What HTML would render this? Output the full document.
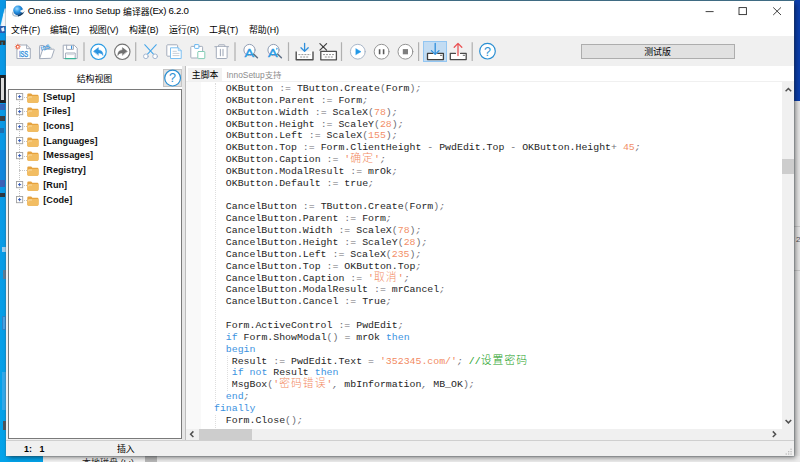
<!DOCTYPE html>
<html lang="zh-CN">
<head>
<meta charset="utf-8">
<title>One6.iss - Inno Setup 编译器(Ex) 6.2.0</title>
<style>
html,body{margin:0;padding:0;}
body{width:800px;height:462px;overflow:hidden;position:relative;background:linear-gradient(180deg,#0a97e5 0%,#0a9ae6 40%,#03a3ea 100%);
  font-family:"Liberation Sans","Noto Sans CJK SC",sans-serif;font-size:9px;color:#000;}
div,span,svg{box-sizing:border-box;}
#desk,#app{position:absolute;left:0;top:0;width:800px;height:462px;overflow:hidden;}
#app div,#app span,#app svg,#desk div{position:absolute;}
#win{left:6px;top:1px;width:788px;height:455px;background:#f0f0f0;
  box-shadow:1.5px 1.5px 5px rgba(0,0,0,.5), 0 0 0 0.6px rgba(90,110,125,.35);}
#title{left:6px;top:1px;width:788px;height:21px;background:#fff;}
#title .txt{left:21.8px;top:4.3px;font-size:9.7px;line-height:12px;white-space:nowrap;color:#000;letter-spacing:-0.05px;}
#app .il2{position:relative;letter-spacing:-0.3px;}
#app .il{position:relative;top:0.9px;font-size:8.8px;letter-spacing:0;}
#menu{left:6px;top:22px;width:788px;height:14px;background:#fff;}
#menu span{top:2px;font-size:8.9px;line-height:12px;white-space:nowrap;}
#tb{left:6px;top:36px;width:788px;height:29.5px;background:#f0f0f0;}
.sep{top:6px;width:1px;height:18px;background:#a0a0a0;}
#lhead{left:6px;top:65.5px;width:176px;height:24px;background:#fff;}
#lhead .t{left:1.5px;width:174px;top:7.3px;text-align:center;font-size:8.9px;line-height:12px;}
#hbtn{left:157px;top:3.3px;width:18.6px;height:18.7px;background:#e1e1e1;border:1px solid #c4c4c4;}
#tree{left:7.5px;top:89px;width:174.5px;height:349.6px;background:#fff;border:1px solid #7a7a7a;}
.ti{left:34.8px;font-weight:bold;font-size:9.15px;line-height:12px;white-space:nowrap;font-family:"Liberation Sans",sans-serif;color:#111;}
.fo{left:18.8px;}
.ex{left:7.4px;}
.vd{width:0;border-left:1px dotted #c4c4c4;}
.hd{height:0;border-top:1px dotted #c4c4c4;}
#split{left:182px;top:65.5px;width:3.5px;height:374px;background:#e6e6e6;border-right:1px solid #bdbdbd;}
#ed{left:185.5px;top:65.5px;width:608.5px;height:374px;background:#fff;}
#tabs{left:0;top:0;width:608.5px;height:16px;background:#fff;}
#tab1{left:2.5px;top:2.5px;width:34px;height:13.5px;background:#f2f2f2;}
#tab1 span{left:3.8px;top:1.2px;font-size:8.9px;line-height:12px;white-space:nowrap;color:#000;}
#tab2{left:41px;top:3.7px;font-size:8.4px;line-height:12px;white-space:nowrap;color:#8c8c8c;}
#margin{left:185.5px;top:81.5px;width:15px;height:347.5px;background:#f9f9f9;}
#code{left:186px;top:82px;width:596px;height:347px;overflow:hidden;
  font-family:"Liberation Mono",monospace;font-size:9.9px;}
.ln{white-space:pre;height:11.85px;line-height:11.85px;color:#262626;}
#code span{position:static !important;}
.k{color:#3d93df;} .n{color:#f28f68;}
.s{color:#f28a62;font-family:"Liberation Mono","Noto Sans CJK SC",monospace;}
.c{color:#22a022;font-family:"Liberation Mono","Noto Sans CJK SC",monospace;}
.z{font-family:"Noto Sans CJK SC",sans-serif;font-size:10.8px;letter-spacing:1.05px;font-weight:300;line-height:0;}
.p{color:#6e6e76;} .q{color:#70707a;font-style:italic;}
.g{width:0;border-left:1px dotted #dedede;}
#vs{left:781.6px;top:81.5px;width:12.4px;height:347.5px;background:#f0f0f0;}
#vs .th{left:0;top:77.5px;width:12.4px;height:14.5px;background:#cdcdcd;}
#hs{left:185.5px;top:429px;width:596px;height:10.5px;background:#f0f0f0;}
#hs .th{left:13px;top:0;width:53.5px;height:10.5px;background:#cdcdcd;}
#corner{left:781.6px;top:429px;width:12.4px;height:10.5px;background:#f0f0f0;}
#status{left:6px;top:439.7px;width:788px;height:16.8px;background:#f0f0f0;border-top:1px solid #cfcfcf;}
#status span{top:2.2px;font-size:8.9px;line-height:12px;white-space:nowrap;}
</style>
</head>
<body>
<div id="desk">
  <div style="left:794px;top:0;width:6px;height:101px;background:#0b3fae"></div>
  <div style="left:794px;top:101px;width:6px;height:361px;background:#e6e6e6"></div>
  <div style="left:794px;top:226px;width:6px;height:1px;background:#c8c8c8"></div>
  <div style="left:794px;top:270px;width:6px;height:1px;background:#c8c8c8"></div>
  <div style="left:796px;top:235px;font-size:8px;line-height:9px;color:#555">2.</div>
  <div style="left:5.5px;top:0;width:789px;height:1.2px;background:#3f7391"></div>

  <svg style="position:absolute;left:0;top:0" width="6" height="60" viewBox="0 0 6 60"><path d="M4.6 8.5L6 8.5L6 26L0.4 26Z" fill="#dcecf8"/><path d="M3.4 14L6 12L6 26L2 26Z" fill="#f7fbfe"/><path d="M0 26H5V33H0Z" fill="#2b5cb0"/><path d="M1 28.5L4 27L4.4 31L2 31.5Z" fill="#e8f0fa"/><path d="M0 40.5H5.4V45H0Z" fill="#3a342c"/><path d="M1.6 42H2.6V45H1.6Z" fill="#0a99e6"/></svg>
  <div style="left:0;top:74.5px;width:6px;height:28px;background:#1f2226"></div>
  <div style="left:1px;top:78px;width:3.4px;height:22px;background:#dcdcdc"></div>
  <div style="left:0;top:103.5px;width:5px;height:6.5px;background:#3466bc"></div>
  <div style="left:0;top:116px;width:5px;height:4.5px;background:#3a3f46"></div>
  <div style="left:0;top:128px;width:4px;height:5px;background:#1d6fb0"></div>
  <div style="left:0;top:180px;width:5px;height:7px;background:#3c62b8"></div>
  <div style="left:0;top:193px;width:5px;height:4px;background:#2c3640"></div>
  <div style="left:0;top:150px;width:6px;height:30px;background:#1286dc"></div>
  <div style="left:2px;top:247px;width:4px;height:5px;background:#9ccdee"></div>
  <div style="left:3px;top:270px;width:3px;height:9px;background:#5f7f98"></div>
  <div style="left:2px;top:316px;width:4px;height:14px;background:#4aa3e4;border:1px solid #2f84c8"></div>
  <div style="left:2px;top:372px;width:4px;height:38px;background:#35a9ea"></div>
  <div style="left:3px;top:421px;width:3px;height:9px;background:#50565c"></div>
  <div style="left:43px;top:456px;width:102px;height:6px;background:#f4f4f4;overflow:hidden"><span style="position:absolute;left:39px;top:2.2px;font-size:9px;line-height:10px;white-space:nowrap;color:#222">本地磁盘 (L:)</span></div>
  <div style="left:145px;top:456px;width:12px;height:6px;background:#b9b9b9"></div>
  <div style="left:157px;top:456px;width:643px;height:6px;background:#ececec"></div>
</div>
<div id="app">
  <div id="win"></div>
  <div id="title"><svg style="left:4.5px;top:3.5px" width="15" height="14" viewBox="10.5 4.5 15 14">
<defs><radialGradient id="gl" cx="0.38" cy="0.32" r="0.75"><stop offset="0" stop-color="#9fdcff"/><stop offset="0.45" stop-color="#2a97e6"/><stop offset="1" stop-color="#0a4e9c"/></radialGradient></defs>
<circle cx="17.6" cy="10" r="4.9" fill="url(#gl)"/>
<path d="M12.7 11.4C11.2 14.4 13.4 16 16.8 15.4C20 14.8 22.8 12.8 23.4 10.4" fill="none" stroke="#b4c4d0" stroke-width="1.5"/>
<path d="M17.4 15.3C20.2 14.6 22.6 12.8 23.3 10.6" fill="none" stroke="#143e66" stroke-width="1.5"/>
<path d="M19.4 10.4L23.5 8.2L24 11.4L21.6 12.2Z" fill="#f6fafc"/>
</svg>
<svg style="left:696px;top:4px" width="84" height="14" viewBox="702 5 84 14" fill="none" stroke="#2b2b2b" stroke-width="0.9"><path d="M705.6 11.6H713.6"/><rect x="739" y="7.6" width="7.4" height="7"/><path d="M773.2 7.4L781 15M781 7.4L773.2 15"/></svg>
<span class="txt">One6.iss - Inno Setup <span class="il">编译器</span><span class="il2">(Ex) 6.2.0</span></span></div>
  <div id="menu">
    <span style="left:5px">文件(F)</span><span style="left:44px">编辑(E)</span><span style="left:83px">视图(V)</span><span style="left:123px">构建(B)</span><span style="left:163px">运行(R)</span><span style="left:203px">工具(T)</span><span style="left:243px">帮助(H)</span>
  </div>
  <div id="tb"><div style="left:417px;top:4.8px;width:23.5px;height:20.8px;background:#c2dcf3;border:1px solid #93c6f2"></div>
<svg style="left:0;top:0" width="788" height="29.5" viewBox="6 36 788 29.5" fill="none" stroke-linecap="round" stroke-linejoin="round">
<g stroke="#b0b0b0" stroke-width="1.2" stroke-linecap="butt">
<path d="M84 42.3V61M135.7 42.3V61M235 42.3V61M288.5 42.3V61M341.5 42.3V61M418.6 42.3V61M472.2 42.3V61"/>
</g>
<!-- new ISS -->
<g>
<path d="M17.3 45H26.6L30.3 48.7V58.5H17.3Z" fill="#fff" stroke="#a3acbb" stroke-width="1"/>
<path d="M26.6 45V48.7H30.3" stroke="#a3acbb" stroke-width="1"/>
<circle cx="17.8" cy="46.7" r="1.5" fill="#fff" stroke="#f2603c" stroke-width="1.1"/>
<path d="M17.8 44.1V44.5M17.8 48.9V49.3M15.2 46.7H15.6M20 46.7H20.4M16 44.9L16.3 45.2M19.3 48.2L19.6 48.5M16 48.5L16.3 48.2M19.3 45.2L19.6 44.9" stroke="#f2603c" stroke-width="0.7"/>
<text x="18.9" y="57.2" font-family="Liberation Sans, sans-serif" font-size="8.5" fill="#3592dc" stroke="#3592dc" stroke-width="0.4" textLength="9.3" lengthAdjust="spacingAndGlyphs">ISS</text>
</g>
<!-- open -->
<g>
<path d="M39.6 58.2V46.2Q39.6 45.5 40.3 45.5H43.6L45 47.3H50.3Q51 47.3 51 48V49.3" fill="#fff" stroke="#a3acbb"/>
<path d="M39.7 58.3L42.6 49.7Q42.8 49.2 43.4 49.2H53.6Q54.4 49.2 54.2 49.9L51.6 57.7Q51.4 58.3 50.8 58.3Z" fill="#fff" stroke="#a3acbb"/>
<text x="45.4" y="49.6" font-family="Liberation Sans, sans-serif" font-size="5.8" fill="#3b97dd" text-anchor="middle" stroke="#3b97dd" stroke-width="0.25" transform="rotate(-16 45.4 48)">ISS</text>
</g>
<!-- save -->
<g>
<path d="M63.6 45.2H74.2L77.2 48.2V58.5H63.6Z" fill="#fff" stroke="#a3acbb"/>
<path d="M66.6 45.2V49.4H73.4V45.2" stroke="#a3acbb"/>
<path d="M71.6 46V48.4" stroke="#2f8fe0" stroke-width="1.1"/>
<path d="M65.6 58.3V53H75.2V58.3" stroke="#a3acbb"/>
<path d="M67.3 54.6H73.5" stroke="#c9ced6" stroke-width="0.8"/>
<path d="M65.2 58.6H75.6" stroke="#3db69a" stroke-width="1.1"/>
</g>
<!-- undo -->
<g>
<circle cx="98.5" cy="51.8" r="7.7" fill="#fff" stroke="#2b9be3" stroke-width="1.15"/>
<path d="M93.6 51.3L98.4 47.6V49.9C101.6 50 103.2 52.2 103 55.6C102.2 53.7 100.8 52.9 98.4 52.9V55.1Z" fill="#2b94e0" stroke="#2b94e0" stroke-width="0.4"/>
</g>
<!-- redo -->
<g>
<circle cx="122.3" cy="51.8" r="7.7" fill="#fff" stroke="#747474" stroke-width="1.1"/>
<path d="M127.2 51.3L122.4 47.6V49.9C119.2 50 117.6 52.2 117.8 55.6C118.6 53.7 120 52.9 122.4 52.9V55.1Z" fill="#707070" stroke="#707070" stroke-width="0.4"/>
</g>
<!-- cut -->
<g>
<path d="M144.7 44.7L153.9 54.6M156.3 44.7L147.1 54.6" stroke="#45a6ea" stroke-width="1.05"/>
<circle cx="145.9" cy="56.3" r="2.35" fill="#fff" stroke="#9fb2cc" stroke-width="0.95"/>
<circle cx="155.1" cy="56.3" r="2.35" fill="#fff" stroke="#9fb2cc" stroke-width="0.95"/>
</g>
<!-- copy -->
<g>
<path d="M170.4 56.2H167.6Q166.8 56.2 166.8 55.4V45.6Q166.8 44.8 167.6 44.8H176.8Q177.6 44.8 177.6 45.6V47.4" fill="#fff" stroke="#a3acbb"/>
<path d="M170.9 47.8H178.3L181.2 50.7V58.5H170.9Z" fill="#fff" stroke="#7dc0f2"/>
<path d="M178.3 47.8V50.7H181.2" stroke="#7dc0f2" stroke-width="0.8"/>
<path d="M173 51.3H176.4M173 53.4H179M173 55.6H179" stroke="#c3c9d3" stroke-width="0.9"/>
</g>
<!-- paste -->
<g>
<path d="M197.4 58H191.6Q190.8 58 190.8 57.2V47.2Q190.8 46.4 191.6 46.4H201.8Q202.6 46.4 202.6 47.2V51" fill="#fff" stroke="#a3acbb"/>
<rect x="194.6" y="44.6" width="4.3" height="3.8" rx="0.6" fill="#fff" stroke="#6ab8f0"/>
<rect x="197.8" y="51.5" width="7" height="7.1" rx="0.6" fill="#fff" stroke="#84cdb6"/>
</g>
<!-- delete -->
<g stroke="#a3acbb">
<path d="M214.8 46.7H228.6"/>
<path d="M218.6 46.5V45.4Q218.6 44.8 219.2 44.8H224.2Q224.8 44.8 224.8 45.4V46.5"/>
<path d="M216.3 46.9V57.7Q216.3 58.5 217.1 58.5H226.3Q227.1 58.5 227.1 57.7V46.9" fill="#fff"/>
<path d="M220.4 49.4V55.8M223 49.4V55.8" stroke-width="1.1"/>
</g>
<!-- find -->
<g>
<circle cx="249.5" cy="50" r="5.6" fill="#fff" stroke="#909eb4" stroke-width="1"/>
<path d="M253.8 54.2L257.4 57.8" stroke="#5f6f86" stroke-width="1.5"/>
<text x="244.6" y="57.2" font-family="Liberation Sans, sans-serif" font-size="11.4" fill="#2b9be3" stroke="#2b9be3" stroke-width="0.35" textLength="9.6" lengthAdjust="spacingAndGlyphs">A</text>
</g>
<g>
<circle cx="273.5" cy="50" r="5.6" fill="#fff" stroke="#909eb4" stroke-width="1"/>
<path d="M277.8 54.2L281.4 57.8" stroke="#5f6f86" stroke-width="1.5"/>
<text x="268" y="57.2" font-family="Liberation Sans, sans-serif" font-size="11.4" fill="#2b9be3" stroke="#2b9be3" stroke-width="0.35" textLength="9.6" lengthAdjust="spacingAndGlyphs">A</text>
<path d="M276.3 47.6L278 48.8L276.3 50Z" fill="#2b9be3"/>
</g>
<!-- compile -->
<g>
<path d="M296.2 51.4V59.8H313V51.4" stroke="#4e4e4e" stroke-width="1.4" fill="#fff" stroke-linecap="butt"/>
<path d="M298.4 54.6H310.8M300.2 57H309" stroke="#8a8a8a" stroke-width="0.9" stroke-dasharray="2 1" stroke-linecap="butt"/>
<path d="M304.6 43.3V51.2M301 47.8L304.6 51.4L308.2 47.8" stroke="#2f8fdc" stroke-width="1.3"/>
</g>
<!-- stop compile -->
<g>
<path d="M320.8 51.4V59.8H336.4V51.4Z" stroke="#4e4e4e" stroke-width="1.3" fill="#fff" stroke-linecap="butt"/>
<path d="M323 54.6H334.4M324.8 57H332.8" stroke="#8a8a8a" stroke-width="0.9" stroke-dasharray="2 1" stroke-linecap="butt"/>
<path d="M319.9 43.6L326.6 50.2M326.6 43.6L319.9 50.2" stroke="#3e3e3e" stroke-width="1.15"/>
</g>
<!-- play -->
<g>
<circle cx="357.8" cy="51.7" r="7.4" fill="#fff" stroke="#a4b3c6" stroke-width="0.95"/>
<path d="M356 48.8L361 51.7L356 54.6Z" fill="#2298e8" stroke="#2298e8" stroke-width="0.5"/>
</g>
<!-- pause -->
<g>
<circle cx="381.6" cy="51.7" r="7.4" fill="#fff" stroke="#8e8e8e" stroke-width="0.95"/>
<path d="M379.6 49.2V54.2M383.6 49.2V54.2" stroke="#5a5a5a" stroke-width="1.6" stroke-linecap="butt"/>
</g>
<!-- stop -->
<g>
<circle cx="405.4" cy="51.7" r="7.4" fill="#fff" stroke="#8e8e8e" stroke-width="0.95"/>
<rect x="402.8" y="49.1" width="5.2" height="5.2" fill="#7e7e7e"/>
</g>
<!-- download selected -->
<g>
<path d="M427.5 53.4H443.4V59.6H427.5Z" stroke="none" fill="#fff"/><path d="M432.6 53.4H427.5V59.6H443.4V53.4H437.8" stroke="#3f3f3f" stroke-width="1.3"/>
<path d="M440.4 55.3H441.8" stroke="#555" stroke-width="0.9"/>
<path d="M435.2 43.3V54.2M431.4 50.6L435.2 54.4L439 50.6" stroke="#2f8fdc" stroke-width="1.3"/>
</g>
<!-- upload -->
<g>
<path d="M450.3 53.4H466.2V59.6H450.3Z" stroke="none" fill="#fff"/><path d="M455.4 53.4H450.3V59.6H466.2V53.4H460.6" stroke="#4a4a4a" stroke-width="1.3"/>
<path d="M463.2 55.3H464.6" stroke="#555" stroke-width="0.9"/>
<path d="M458 55.6V43.6M454.2 47.2L458 43.4L461.8 47.2" stroke="#ea5355" stroke-width="1.3"/>
</g>
<!-- help -->
<g>
<circle cx="487.5" cy="51.2" r="7.8" fill="#fff" stroke="#2b8fd2" stroke-width="1.2"/>
<text x="487.5" y="55.6" font-family="Liberation Sans, sans-serif" font-size="12.5" fill="#2b8fd2" text-anchor="middle" stroke="none">?</text>
</g>
</svg>
<div style="left:575.3px;top:8px;width:153.5px;height:15.4px;background:#e1e1e1;border:1px solid #adadad"><span style="left:0;width:150.5px;top:0.9px;text-align:center;font-size:8.9px;line-height:12px;color:#000">测试版</span></div>
</div>
  <div id="lhead"><span class="t">结构视图</span><div id="hbtn"><svg style="left:-1px;top:-1px" width="18.6" height="18.7" viewBox="0 0 18.6 18.7"><circle cx="9.6" cy="9.1" r="7.9" fill="#fff" stroke="#2b8fd2" stroke-width="1.2"/><text x="9.6" y="13.5" font-family="Liberation Sans, sans-serif" font-size="12.5" fill="#2b8fd2" text-anchor="middle">?</text></svg></div></div>
  <div id="tree"><div class="vd" style="left:10.70px;top:3.20px;height:107.04px"></div><div class="hd" style="left:10.70px;top:6.70px;width:7.50px"></div><div class="ti" style="top:0.60px">[Setup]</div><svg class="fo" style="top:2.50px" width="12" height="10" viewBox="0 0 12 10"><path d="M0.3 1.6 Q0.3 0.5 1.4 0.5 L4.2 0.5 L5.4 1.8 L10.4 1.8 Q11.5 1.8 11.5 2.9 L11.5 8.6 Q11.5 9.7 10.4 9.7 L1.4 9.7 Q0.3 9.7 0.3 8.6 Z" fill="#e5a23e"/><path d="M0.3 4 Q0.3 3 1.4 3 L10.6 3 Q11.7 3 11.7 4 L11.5 8.6 Q11.5 9.7 10.4 9.7 L1.4 9.7 Q0.3 9.7 0.3 8.6 Z" fill="#f2bd62"/><path d="M1.6 5.4V4.6Q1.6 4 2.2 4H5" stroke="#fbe3b6" stroke-width="0.8" fill="none"/></svg><svg class="ex" style="top:3.10px" width="8" height="8" viewBox="0 0 8 8"><rect x="0.5" y="0.5" width="6.2" height="6.2" fill="#fff" stroke="#a0a0a0" stroke-width="0.9"/><path d="M2 3.6H5.2M3.6 2V5.2" stroke="#3056b4" stroke-width="0.9" fill="none"/></svg><div class="hd" style="left:10.70px;top:21.42px;width:7.50px"></div><div class="ti" style="top:15.32px">[Files]</div><svg class="fo" style="top:17.22px" width="12" height="10" viewBox="0 0 12 10"><path d="M0.3 1.6 Q0.3 0.5 1.4 0.5 L4.2 0.5 L5.4 1.8 L10.4 1.8 Q11.5 1.8 11.5 2.9 L11.5 8.6 Q11.5 9.7 10.4 9.7 L1.4 9.7 Q0.3 9.7 0.3 8.6 Z" fill="#e5a23e"/><path d="M0.3 4 Q0.3 3 1.4 3 L10.6 3 Q11.7 3 11.7 4 L11.5 8.6 Q11.5 9.7 10.4 9.7 L1.4 9.7 Q0.3 9.7 0.3 8.6 Z" fill="#f2bd62"/><path d="M1.6 5.4V4.6Q1.6 4 2.2 4H5" stroke="#fbe3b6" stroke-width="0.8" fill="none"/></svg><svg class="ex" style="top:17.82px" width="8" height="8" viewBox="0 0 8 8"><rect x="0.5" y="0.5" width="6.2" height="6.2" fill="#fff" stroke="#a0a0a0" stroke-width="0.9"/><path d="M2 3.6H5.2M3.6 2V5.2" stroke="#3056b4" stroke-width="0.9" fill="none"/></svg><div class="hd" style="left:10.70px;top:36.14px;width:7.50px"></div><div class="ti" style="top:30.04px">[Icons]</div><svg class="fo" style="top:31.94px" width="12" height="10" viewBox="0 0 12 10"><path d="M0.3 1.6 Q0.3 0.5 1.4 0.5 L4.2 0.5 L5.4 1.8 L10.4 1.8 Q11.5 1.8 11.5 2.9 L11.5 8.6 Q11.5 9.7 10.4 9.7 L1.4 9.7 Q0.3 9.7 0.3 8.6 Z" fill="#e5a23e"/><path d="M0.3 4 Q0.3 3 1.4 3 L10.6 3 Q11.7 3 11.7 4 L11.5 8.6 Q11.5 9.7 10.4 9.7 L1.4 9.7 Q0.3 9.7 0.3 8.6 Z" fill="#f2bd62"/><path d="M1.6 5.4V4.6Q1.6 4 2.2 4H5" stroke="#fbe3b6" stroke-width="0.8" fill="none"/></svg><svg class="ex" style="top:32.54px" width="8" height="8" viewBox="0 0 8 8"><rect x="0.5" y="0.5" width="6.2" height="6.2" fill="#fff" stroke="#a0a0a0" stroke-width="0.9"/><path d="M2 3.6H5.2M3.6 2V5.2" stroke="#3056b4" stroke-width="0.9" fill="none"/></svg><div class="hd" style="left:10.70px;top:50.86px;width:7.50px"></div><div class="ti" style="top:44.76px">[Languages]</div><svg class="fo" style="top:46.66px" width="12" height="10" viewBox="0 0 12 10"><path d="M0.3 1.6 Q0.3 0.5 1.4 0.5 L4.2 0.5 L5.4 1.8 L10.4 1.8 Q11.5 1.8 11.5 2.9 L11.5 8.6 Q11.5 9.7 10.4 9.7 L1.4 9.7 Q0.3 9.7 0.3 8.6 Z" fill="#e5a23e"/><path d="M0.3 4 Q0.3 3 1.4 3 L10.6 3 Q11.7 3 11.7 4 L11.5 8.6 Q11.5 9.7 10.4 9.7 L1.4 9.7 Q0.3 9.7 0.3 8.6 Z" fill="#f2bd62"/><path d="M1.6 5.4V4.6Q1.6 4 2.2 4H5" stroke="#fbe3b6" stroke-width="0.8" fill="none"/></svg><svg class="ex" style="top:47.26px" width="8" height="8" viewBox="0 0 8 8"><rect x="0.5" y="0.5" width="6.2" height="6.2" fill="#fff" stroke="#a0a0a0" stroke-width="0.9"/><path d="M2 3.6H5.2M3.6 2V5.2" stroke="#3056b4" stroke-width="0.9" fill="none"/></svg><div class="hd" style="left:10.70px;top:65.58px;width:7.50px"></div><div class="ti" style="top:59.48px">[Messages]</div><svg class="fo" style="top:61.38px" width="12" height="10" viewBox="0 0 12 10"><path d="M0.3 1.6 Q0.3 0.5 1.4 0.5 L4.2 0.5 L5.4 1.8 L10.4 1.8 Q11.5 1.8 11.5 2.9 L11.5 8.6 Q11.5 9.7 10.4 9.7 L1.4 9.7 Q0.3 9.7 0.3 8.6 Z" fill="#e5a23e"/><path d="M0.3 4 Q0.3 3 1.4 3 L10.6 3 Q11.7 3 11.7 4 L11.5 8.6 Q11.5 9.7 10.4 9.7 L1.4 9.7 Q0.3 9.7 0.3 8.6 Z" fill="#f2bd62"/><path d="M1.6 5.4V4.6Q1.6 4 2.2 4H5" stroke="#fbe3b6" stroke-width="0.8" fill="none"/></svg><svg class="ex" style="top:61.98px" width="8" height="8" viewBox="0 0 8 8"><rect x="0.5" y="0.5" width="6.2" height="6.2" fill="#fff" stroke="#a0a0a0" stroke-width="0.9"/><path d="M2 3.6H5.2M3.6 2V5.2" stroke="#3056b4" stroke-width="0.9" fill="none"/></svg><div class="hd" style="left:10.70px;top:80.30px;width:7.50px"></div><div class="ti" style="top:74.20px">[Registry]</div><svg class="fo" style="top:76.10px" width="12" height="10" viewBox="0 0 12 10"><path d="M0.3 1.6 Q0.3 0.5 1.4 0.5 L4.2 0.5 L5.4 1.8 L10.4 1.8 Q11.5 1.8 11.5 2.9 L11.5 8.6 Q11.5 9.7 10.4 9.7 L1.4 9.7 Q0.3 9.7 0.3 8.6 Z" fill="#e5a23e"/><path d="M0.3 4 Q0.3 3 1.4 3 L10.6 3 Q11.7 3 11.7 4 L11.5 8.6 Q11.5 9.7 10.4 9.7 L1.4 9.7 Q0.3 9.7 0.3 8.6 Z" fill="#f2bd62"/><path d="M1.6 5.4V4.6Q1.6 4 2.2 4H5" stroke="#fbe3b6" stroke-width="0.8" fill="none"/></svg><div class="hd" style="left:10.70px;top:95.02px;width:7.50px"></div><div class="ti" style="top:88.92px">[Run]</div><svg class="fo" style="top:90.82px" width="12" height="10" viewBox="0 0 12 10"><path d="M0.3 1.6 Q0.3 0.5 1.4 0.5 L4.2 0.5 L5.4 1.8 L10.4 1.8 Q11.5 1.8 11.5 2.9 L11.5 8.6 Q11.5 9.7 10.4 9.7 L1.4 9.7 Q0.3 9.7 0.3 8.6 Z" fill="#e5a23e"/><path d="M0.3 4 Q0.3 3 1.4 3 L10.6 3 Q11.7 3 11.7 4 L11.5 8.6 Q11.5 9.7 10.4 9.7 L1.4 9.7 Q0.3 9.7 0.3 8.6 Z" fill="#f2bd62"/><path d="M1.6 5.4V4.6Q1.6 4 2.2 4H5" stroke="#fbe3b6" stroke-width="0.8" fill="none"/></svg><svg class="ex" style="top:91.42px" width="8" height="8" viewBox="0 0 8 8"><rect x="0.5" y="0.5" width="6.2" height="6.2" fill="#fff" stroke="#a0a0a0" stroke-width="0.9"/><path d="M2 3.6H5.2M3.6 2V5.2" stroke="#3056b4" stroke-width="0.9" fill="none"/></svg><div class="hd" style="left:10.70px;top:109.74px;width:7.50px"></div><div class="ti" style="top:103.64px">[Code]</div><svg class="fo" style="top:105.54px" width="12" height="10" viewBox="0 0 12 10"><path d="M0.3 1.6 Q0.3 0.5 1.4 0.5 L4.2 0.5 L5.4 1.8 L10.4 1.8 Q11.5 1.8 11.5 2.9 L11.5 8.6 Q11.5 9.7 10.4 9.7 L1.4 9.7 Q0.3 9.7 0.3 8.6 Z" fill="#e5a23e"/><path d="M0.3 4 Q0.3 3 1.4 3 L10.6 3 Q11.7 3 11.7 4 L11.5 8.6 Q11.5 9.7 10.4 9.7 L1.4 9.7 Q0.3 9.7 0.3 8.6 Z" fill="#f2bd62"/><path d="M1.6 5.4V4.6Q1.6 4 2.2 4H5" stroke="#fbe3b6" stroke-width="0.8" fill="none"/></svg><svg class="ex" style="top:106.14px" width="8" height="8" viewBox="0 0 8 8"><rect x="0.5" y="0.5" width="6.2" height="6.2" fill="#fff" stroke="#a0a0a0" stroke-width="0.9"/><path d="M2 3.6H5.2M3.6 2V5.2" stroke="#3056b4" stroke-width="0.9" fill="none"/></svg></div>
  <div id="split"></div>
  <div id="ed"><div id="tabs"><div id="tab1"><span>主脚本</span></div><span id="tab2">InnoSetup支持</span></div></div>
  <div id="margin"></div>
  <div style="left:185.5px;top:80.8px;width:608.5px;height:1px;background:#f0f0f0"></div>
  <div id="code"><div class="ln" style="left:16.10px;top:0.95px">    OKButton <span class="p">:</span><span class="p">=</span> TButton.Create<span class="p">(</span>Form<span class="p">)</span><span class="q">;</span></div><div class="ln" style="left:16.10px;top:12.80px">    OKButton.Parent <span class="p">:</span><span class="p">=</span> Form<span class="q">;</span></div><div class="ln" style="left:16.10px;top:24.65px">    OKButton.Width <span class="p">:</span><span class="p">=</span> ScaleX<span class="p">(</span><span class="n">78</span><span class="p">)</span><span class="q">;</span></div><div class="ln" style="left:16.10px;top:36.51px">    OKButton.Height <span class="p">:</span><span class="p">=</span> ScaleY<span class="p">(</span><span class="n">28</span><span class="p">)</span><span class="q">;</span></div><div class="ln" style="left:16.10px;top:48.36px">    OKButton.Left <span class="p">:</span><span class="p">=</span> ScaleX<span class="p">(</span><span class="n">155</span><span class="p">)</span><span class="q">;</span></div><div class="ln" style="left:16.10px;top:60.21px">    OKButton.Top <span class="p">:</span><span class="p">=</span> Form.ClientHeight <span class="p">-</span> PwdEdit.Top <span class="p">-</span> OKButton.Height<span class="p">+</span> <span class="n">45</span><span class="q">;</span></div><div class="ln" style="left:16.10px;top:72.06px">    OKButton.Caption <span class="p">:</span><span class="p">=</span> <span class="s">'<span class="z">确定</span>'</span><span class="q">;</span></div><div class="ln" style="left:16.10px;top:83.91px">    OKButton.ModalResult <span class="p">:</span><span class="p">=</span> mrOk<span class="q">;</span></div><div class="ln" style="left:16.10px;top:95.77px">    OKButton.Default <span class="p">:</span><span class="p">=</span> true<span class="q">;</span></div><div class="ln" style="left:16.10px;top:119.47px">    CancelButton <span class="p">:</span><span class="p">=</span> TButton.Create<span class="p">(</span>Form<span class="p">)</span><span class="q">;</span></div><div class="ln" style="left:16.10px;top:131.32px">    CancelButton.Parent <span class="p">:</span><span class="p">=</span> Form<span class="q">;</span></div><div class="ln" style="left:16.10px;top:143.17px">    CancelButton.Width <span class="p">:</span><span class="p">=</span> ScaleX<span class="p">(</span><span class="n">78</span><span class="p">)</span><span class="q">;</span></div><div class="ln" style="left:16.10px;top:155.03px">    CancelButton.Height <span class="p">:</span><span class="p">=</span> ScaleY<span class="p">(</span><span class="n">28</span><span class="p">)</span><span class="q">;</span></div><div class="ln" style="left:16.10px;top:166.88px">    CancelButton.Left <span class="p">:</span><span class="p">=</span> ScaleX<span class="p">(</span><span class="n">235</span><span class="p">)</span><span class="q">;</span></div><div class="ln" style="left:16.10px;top:178.73px">    CancelButton.Top <span class="p">:</span><span class="p">=</span> OKButton.Top<span class="q">;</span></div><div class="ln" style="left:16.10px;top:190.58px">    CancelButton.Caption <span class="p">:</span><span class="p">=</span> <span class="s">'<span class="z">取消</span>'</span><span class="q">;</span></div><div class="ln" style="left:16.10px;top:202.43px">    CancelButton.ModalResult <span class="p">:</span><span class="p">=</span> mrCancel<span class="q">;</span></div><div class="ln" style="left:16.10px;top:214.29px">    CancelButton.Cancel <span class="p">:</span><span class="p">=</span> True<span class="q">;</span></div><div class="ln" style="left:16.10px;top:237.99px">    Form.ActiveControl <span class="p">:</span><span class="p">=</span> PwdEdit<span class="q">;</span></div><div class="ln" style="left:16.10px;top:249.84px">    <span class="k">if</span> Form.ShowModal<span class="p">(</span><span class="p">)</span> <span class="p">=</span> mrOk <span class="k">then</span></div><div class="ln" style="left:16.10px;top:261.69px">    <span class="k">begin</span></div><div class="ln" style="left:16.10px;top:273.55px">     Result <span class="p">:</span><span class="p">=</span> PwdEdit.Text <span class="p">=</span> <span class="s">'352345.com/'</span><span class="q">;</span> <span class="c">//<span class="z">设置密码</span></span></div><div class="ln" style="left:16.10px;top:285.40px">     <span class="k">if</span> <span class="k">not</span> Result <span class="k">then</span></div><div class="ln" style="left:16.10px;top:297.25px">     MsgBox<span class="p">(</span><span class="s">'<span class="z">密码错误</span>'</span><span class="q">,</span> mbInformation<span class="q">,</span> MB_OK<span class="p">)</span><span class="q">;</span></div><div class="ln" style="left:16.10px;top:309.10px">    <span class="k">end</span><span class="q">;</span></div><div class="ln" style="left:16.10px;top:320.95px">  <span class="k">finally</span></div><div class="ln" style="left:16.10px;top:332.81px">    Form.Close<span class="p">(</span><span class="p">)</span><span class="q">;</span></div><div class="g" style="left:28.75px;top:0.95px;height:320.00px"></div><div class="g" style="left:28.75px;top:332.81px;height:23.70px"></div><div class="g" style="left:40.60px;top:273.55px;height:35.56px"></div></div>
  <div id="vs"><div class="th"></div><svg style="left:0;top:0" width="12.4" height="347.5" viewBox="0 0 12.4 347.5" fill="none" stroke="#505050" stroke-width="1.5"><path d="M3.6 9.2L6.4 6.4L9.2 9.2"/><path d="M3.6 338.2L6.4 341L9.2 338.2"/></svg></div>
  <div id="hs"><div class="th"></div><svg style="left:0;top:0" width="596" height="10.5" viewBox="0 0 596 10.5" fill="none" stroke="#505050" stroke-width="1.5"><path d="M7.4 2.4L4.6 5.2L7.4 8"/><path d="M586.8 2.4L589.6 5.2L586.8 8"/></svg></div>
  <div id="corner"></div>
  <div id="status"><span style="left:18px;font-weight:bold">1:</span><span style="left:33.5px;font-weight:bold">1</span><span style="left:111px">插入</span><svg style="left:778px;top:7px" width="9" height="9" viewBox="0 0 9 9" fill="#bdbdbd"><rect x="6.4" y="0.6" width="1.3" height="1.3"/><rect x="4" y="3" width="1.3" height="1.3"/><rect x="6.4" y="3" width="1.3" height="1.3"/><rect x="1.6" y="5.4" width="1.3" height="1.3"/><rect x="4" y="5.4" width="1.3" height="1.3"/><rect x="6.4" y="5.4" width="1.3" height="1.3"/></svg></div>
</div>
</body>
</html>
